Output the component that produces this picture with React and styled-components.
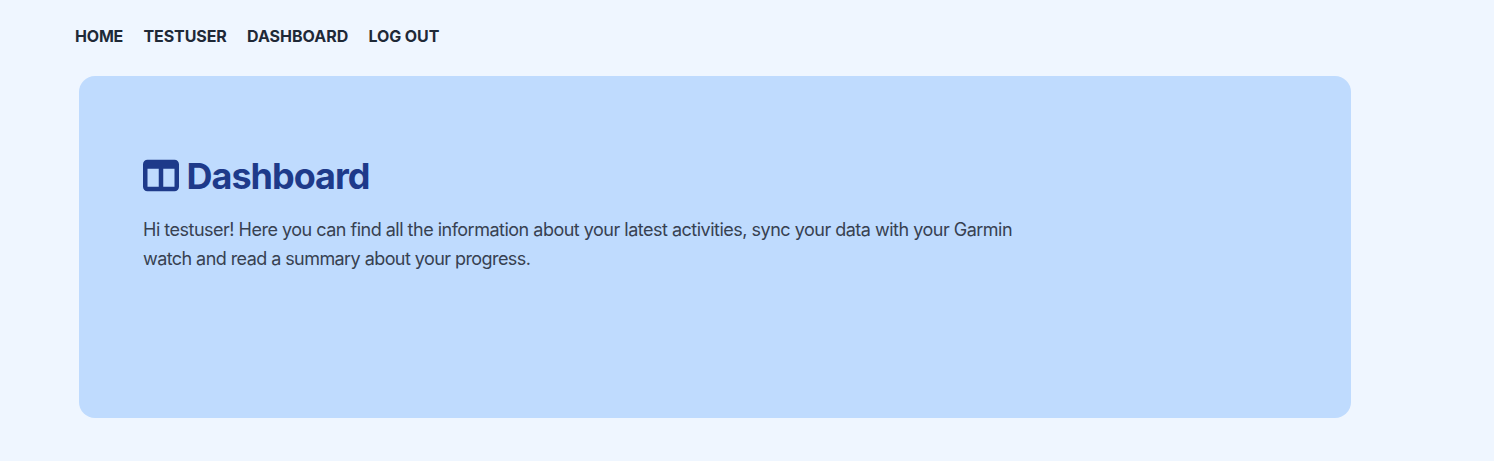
import React from "react";
import styled, { createGlobalStyle } from "styled-components";

const GlobalStyle = createGlobalStyle`
  *, *::before, *::after { box-sizing: border-box; }
  body {
    margin: 0;
    background: #eff6ff;
    font-family: Inter, "Liberation Sans", sans-serif;
  }
`;

const Page = styled.div`
  min-height: 461px;
  padding-bottom: 43px;
`;

const Nav = styled.nav`
  display: flex;
  gap: 20px;
  height: 76px;
  padding: 24px 0 0 75px;
`;

const NavLink = styled.a`
  width: ${({ $width }) => $width}px;
  color: #1f2937;
  font-size: 16px;
  line-height: 24px;
  font-weight: 700;
  letter-spacing: ${({ $tracking }) => $tracking}px;
  white-space: nowrap;
`;

const Card = styled.main`
  width: 1272px;
  height: 342px;
  margin-left: 79px;
  padding: 80px 64px;
  border-radius: 16px;
  background: #bfdbfe;
`;

const Title = styled.h1`
  display: flex;
  align-items: flex-start;
  gap: 7.5px;
  margin: 0;
  color: #1e3a8a;
  font-size: 36px;
  line-height: 40px;
  font-weight: 700;
  letter-spacing: -1px;
`;

const ColumnsIcon = styled.svg`
  width: 36px;
  height: 36px;
  flex: none;
  margin-top: 1px;
`;

const Intro = styled.p`
  margin: 19px 0 0;
  color: #374151;
  font-size: 18px;
  line-height: 29px;
`;

const Line = styled.span`
  display: block;
  letter-spacing: ${({ $tracking }) => $tracking}px;
  white-space: nowrap;
`;

const links = [
  { label: "HOME", width: 48.5, tracking: -0.2 },
  { label: "TESTUSER", width: 83.5, tracking: -0.1 },
  { label: "DASHBOARD", width: 101.5, tracking: 0 },
  { label: "LOG OUT", width: 71, tracking: -0.1 },
];

export default function App() {
  return (
    <Page>
      <GlobalStyle />
      <Nav>
        {links.map(({ label, width, tracking }) => (
          <NavLink key={label} $width={width} $tracking={tracking}>{label}</NavLink>
        ))}
      </Nav>
      <Card>
        <Title>
          <ColumnsIcon viewBox="0 -7 512 512" fill="currentColor" aria-hidden="true">
            <path d="M0 96C0 60.700 28.700 32 64 32H448c35.300 0 64 28.700 64 64V416c0 35.300-28.700 64-64 64H64c-35.300 0-64-28.700-64-64V96zm64 64V416H224V160H64zm384 0H288V416H448V160z" />
          </ColumnsIcon>
          <span>Dashboard</span>
        </Title>
        <Intro>
          <Line $tracking={-0.5}>Hi testuser! Here you can find all the information about your latest activities, sync your data with your Garmin</Line>
          <Line $tracking={-0.57}>watch and read a summary about your progress.</Line>
        </Intro>
      </Card>
    </Page>
  );
}
